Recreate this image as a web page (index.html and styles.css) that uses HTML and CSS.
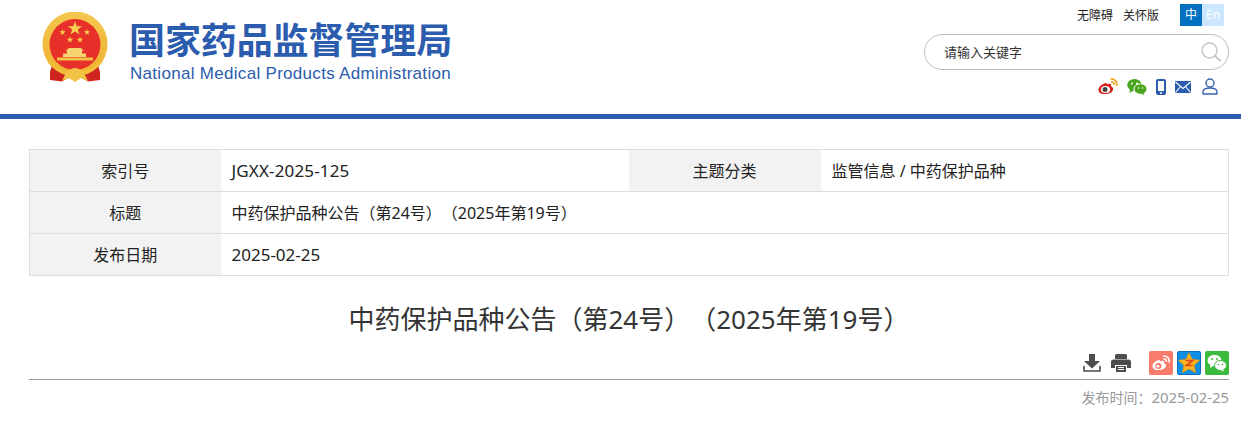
FILE: index.html
```html
<!DOCTYPE html>
<html lang="zh-CN">
<head>
<meta charset="utf-8">
<title>中药保护品种公告（第24号）（2025年第19号）</title>
<link rel="stylesheet" href="styles.css">
</head>
<body>
<header class="header">
  <div class="header-inner">
    <a class="brand">
      <svg class="emblem" viewBox="0 0 66 70" width="66" height="70">
        <defs>
          <linearGradient id="gold" x1="0" y1="0" x2="0" y2="1">
            <stop offset="0" stop-color="#f4c74f"/>
            <stop offset="1" stop-color="#eeb02f"/>
          </linearGradient>
        </defs>
        <path d="M12 46 L8 60 L8 68 L20 69.500 L28 65 L38 65 L46 69.500 L58 68 L58 60 L54 46 Z" fill="#cf2420"/>
        <circle cx="33" cy="32" r="32.500" fill="url(#gold)"/>
        <circle cx="33" cy="32.500" r="25.500" fill="#e8302a"/>
        <path d="M33 9 l1.700 5.200 5.500 0 -4.400 3.200 1.700 5.200 -4.500 -3.200 -4.500 3.200 1.700 -5.200 -4.400 -3.200 5.500 0z" fill="#f7cf50"/>
        <path d="M20.500 17 l.8 2.300 2.400 0 -1.900 1.400 .7 2.300 -2 -1.400 -2 1.400 .7 -2.300 -1.900 -1.400 2.400 0z" fill="#f7cf50"/>
        <path d="M45 17 l.8 2.300 2.400 0 -1.900 1.400 .7 2.300 -2 -1.400 -2 1.400 .7 -2.300 -1.900 -1.400 2.400 0z" fill="#f7cf50"/>
        <path d="M28 24.500 l.8 2.300 2.400 0 -1.900 1.400 .7 2.300 -2 -1.400 -2 1.400 .7 -2.300 -1.900 -1.400 2.400 0z" fill="#f7cf50"/>
        <path d="M38 24.500 l.8 2.300 2.400 0 -1.900 1.400 .7 2.300 -2 -1.400 -2 1.400 .7 -2.300 -1.900 -1.400 2.400 0z" fill="#f7cf50"/>
        <path d="M27 36 h12 l2.500 3 h-1.500 v2.500 h4 v3.500 h-23 v-3.500 h4 v-2.500 h-1.500z" fill="#f7d672"/>
        <path d="M15 45.500 h36 v3 h-36z" fill="#f4c446"/>
        <path d="M7 47 Q18 60 33 60 Q48 60 59 47 L60 51 Q48 64 33 64 Q18 64 6 51Z" fill="#f2bd38"/>
        <path d="M20 69 L24 61 Q33 51 42 61 L46 69 L39 66 L33 70 L27 66Z" fill="#f3c244"/>
      </svg>
      <div class="brand-text">
        <div class="brand-cn">国家药品监督管理局</div>
        <div class="brand-en">National Medical Products Administration</div>
      </div>
    </a>
    <div class="tools">
      <div class="tools-top">
        <a class="tool-link">无障碍</a>
        <a class="tool-link">关怀版</a>
        <div class="lang">
          <span class="lang-cn">中</span><span class="lang-en">En</span>
        </div>
      </div>
      <div class="search">
        <span class="search-text">请输入关键字</span>
        <svg class="search-icon" viewBox="0 0 20 20" width="20" height="20">
          <circle cx="8.500" cy="8.500" r="7.500" fill="none" stroke="#c4c4c4" stroke-width="1.400"/>
          <path d="M14 14 L19.500 19" stroke="#c4c4c4" stroke-width="1.800" fill="none"/>
        </svg>
      </div>
      <div class="socials">
        <svg class="s-weibo" viewBox="0 0 20 17" width="20" height="17">
          <path d="M8 5 C3.500 6 0 9.500 0.500 12.500 C1 15.500 5 16.500 8.500 16 C13 15.500 15.500 13 15 10.500 C14.800 9 13.500 8.600 13 8.300 C13.500 6.800 13 5.500 11 5.800 C10 6 9 6.500 8.700 6.500 C9 5.500 8.800 4.800 8 5Z" fill="#dc1b1b"/>
          <ellipse cx="7.500" cy="11.500" rx="4.600" ry="3.500" fill="#fff"/>
          <circle cx="7" cy="11.500" r="2.500" fill="#444"/>
          <path d="M12.500 1 C16.500 0.500 19.500 3.500 18.800 7.800 M13 4 C15 3.700 16.500 5 16 7" fill="none" stroke="#f0a722" stroke-width="1.700"/>
        </svg>
        <svg class="s-wechat" viewBox="0 0 20 16" width="20" height="16">
          <ellipse cx="7.500" cy="6" rx="7.300" ry="6" fill="#4ba61e"/>
          <path d="M3 10 L2.500 14 L6.500 11.500Z" fill="#4ba61e"/>
          <ellipse cx="13.500" cy="10" rx="6.500" ry="5.300" fill="#4ba61e" stroke="#fff" stroke-width="1"/>
          <path d="M16.500 14 L17.500 16 L14 15Z" fill="#4ba61e"/>
          <circle cx="5" cy="4.500" r="1" fill="#fff"/><circle cx="10" cy="4.500" r="1" fill="#fff"/>
          <circle cx="11.500" cy="9" r=".8" fill="#fff"/><circle cx="15.500" cy="9" r=".8" fill="#fff"/>
        </svg>
        <svg class="s-phone" viewBox="0 0 10 16" width="10" height="16">
          <rect x="0" y="0" width="10" height="16" rx="2" fill="#2b5cad"/>
          <rect x="2" y="2" width="6" height="10" fill="#fff"/>
          <circle cx="5" cy="14" r="1" fill="#fff"/>
        </svg>
        <svg class="s-mail" viewBox="0 0 16 12" width="16" height="12">
          <rect width="16" height="12" fill="#2b5cad"/>
          <path d="M0.500 1 L8 7.500 L15.500 1 M0.500 11.500 L5.500 5.500 M15.500 11.500 L10.500 5.500" fill="none" stroke="#fff" stroke-width="1.100"/>
        </svg>
        <svg class="s-user" viewBox="0 0 16 17" width="16" height="17">
          <circle cx="8" cy="5" r="4" fill="none" stroke="#3a63ad" stroke-width="1.400"/>
          <path d="M1 16 L1 14 C1 11 4 10 8 10 C12 10 15 11 15 14 L15 16 Z" fill="none" stroke="#3a63ad" stroke-width="1.400" stroke-linejoin="round"/>
        </svg>
      </div>
    </div>
  </div>
</header>
<main class="main">
  <table class="meta">
    <colgroup>
      <col class="col-a"><col class="col-b"><col class="col-c"><col>
    </colgroup>
    <tr>
      <th>索引号</th><td class="td-num"><span class="num code">JGXX-2025-125</span></td>
      <th>主题分类</th><td>监管信息 / 中药保护品种</td>
    </tr>
    <tr>
      <th>标题</th><td colspan="3">中药保护品种公告（第24号）（2025年第19号）</td>
    </tr>
    <tr>
      <th>发布日期</th><td class="td-num" colspan="3"><span class="num">2025-02-25</span></td>
    </tr>
  </table>
  <h1 class="title">中药保护品种公告（第24号）（2025年第19号）</h1>
  <div class="actions">
    <svg class="a-icon" viewBox="0 0 18 18" width="18" height="18">
      <path d="M6 0 h6 v7 h5 l-8 7.500 -8 -7.500 h5z" fill="#4d4d4d"/>
      <path d="M1 12 v5 h16 v-5" fill="none" stroke="#4d4d4d" stroke-width="1.600"/>
    </svg>
    <svg class="a-icon a-print" viewBox="0 0 20 18" width="20" height="18">
      <path d="M4 5 V1.500 Q4 0 5.500 0 H14.500 Q16 0 16 1.500 V5 Z" fill="#4d4d4d"/>
      <path d="M2.500 5.500 H17.500 Q20 5.500 20 8 V14 H16 V11 H4 V14 H0 V8 Q0 5.500 2.500 5.500Z" fill="#4d4d4d"/>
      <path d="M5 12 H15 V18 H5Z" fill="#4d4d4d"/>
      <path d="M7 13.500 H13 M7 15.500 H13" stroke="#fff" stroke-width="1"/>
    </svg>
    <div class="shares">
      <svg class="share" viewBox="0 0 24 24" width="24" height="24">
        <rect width="24" height="24" rx="2" fill="#fa7a6b"/>
        <path d="M10 9 C6 10 3 13 3.500 15.500 C4 18.500 8 19.500 11 19 C15 18.500 17.500 16.500 17 14 C16.800 13 15.500 12.500 15 12.300 C15.500 10.800 15 9.500 13 9.800 L11 10.500 C11.300 9.500 11 8.800 10 9Z" fill="#fff"/>
        <circle cx="9.500" cy="15" r="3" fill="#fa7a6b"/>
        <circle cx="9" cy="15.300" r="1.400" fill="#fff"/>
        <path d="M14 5 C18 4.500 21 7.500 20 11.500 M14.500 8 C16.500 7.700 17.800 9 17.300 11" fill="none" stroke="#fff" stroke-width="1.600"/>
      </svg>
      <svg class="share" viewBox="0 0 24 24" width="24" height="24">
        <rect width="24" height="24" rx="2" fill="#0e8fe3"/>
        <rect x=".5" y=".5" width="23" height="23" rx="2" fill="none" stroke="#0a6dbd"/>
        <path d="M12 1.500 L15.200 8.300 L22.800 9.200 L17.200 14.300 L18.700 21.800 L12 18 L5.300 21.800 L6.800 14.300 L1.200 9.200 L8.800 8.300Z" fill="#fbb41d" stroke="#d98a10" stroke-width=".6"/>
        <path d="M8.500 9.500 H15.500 L9.500 14.500 H15.500" fill="none" stroke="#e0471c" stroke-width="1.700"/>
      </svg>
      <svg class="share" viewBox="0 0 24 24" width="24" height="24">
        <rect width="24" height="24" rx="2" fill="#3cba3e"/>
        <ellipse cx="9.500" cy="9.500" rx="7" ry="5.800" fill="#fff"/>
        <path d="M5.500 13 L5 17 L9 14.500Z" fill="#fff"/>
        <ellipse cx="15.500" cy="14.500" rx="6" ry="5" fill="#fff" stroke="#3cba3e" stroke-width="1"/>
        <path d="M18 18 L19 20.500 L15.500 19Z" fill="#fff"/>
        <circle cx="7" cy="8" r="1" fill="#3cba3e"/><circle cx="12" cy="8" r="1" fill="#3cba3e"/>
        <circle cx="13.500" cy="13.500" r=".8" fill="#3cba3e"/><circle cx="17.500" cy="13.500" r=".8" fill="#3cba3e"/>
      </svg>
    </div>
  </div>
  <div class="pubdate">发布时间：<span class="num">2025-02-25</span></div>
</main>
</body>
</html>
```
FILE: styles.css
```css
* { box-sizing: border-box; }
html, body { margin: 0; padding: 0; background: #fff; }
body {
  font-family: "Noto Sans", "Noto Sans CJK SC", sans-serif;
  color: #333;
  text-spacing-trim: space-all;
}
.num { font-size: 1.0625em; }
.code { letter-spacing: 0.15px; }
.header {
  height: 119px;
  border-bottom: 5px solid #2b5cad;
}
.header-inner {
  display: flex;
  justify-content: space-between;
  padding: 0 12px 0 42px;
}
.brand {
  display: flex;
  padding-top: 12px;
}
.emblem { display: block; }
.brand-text { margin-left: 22px; padding-top: 4px; }
.brand-cn {
  font-family: "Noto Sans CJK SC", sans-serif;
  font-size: 36px;
  line-height: 44px;
  font-weight: 700;
  color: #2b5cad;
  letter-spacing: -0.1px;
  margin-left: -1px;
  white-space: nowrap;
}
.brand-en {
  font-family: "Liberation Sans", sans-serif;
  font-size: 17px;
  line-height: 20px;
  margin-top: 4px;
  color: #2b5cad;
  letter-spacing: 0.3px;
  white-space: nowrap;
}
.tools {
  width: 305px;
  padding-top: 4px;
}
.tools-top {
  display: flex;
  align-items: center;
  justify-content: flex-end;
  height: 22px;
  padding-right: 5px;
}
.tool-link {
  font-size: 12px;
  color: #222;
  margin-right: 10px;
}
.lang { display: flex; margin-left: 11px; }
.lang-cn, .lang-en {
  width: 22px;
  height: 22px;
  font-size: 12px;
  line-height: 22px;
  text-align: center;
  color: #fff;
}
.lang-cn { background: #0070c0; }
.lang-en { background: #cce6ff; }
.search {
  display: flex;
  align-items: center;
  justify-content: space-between;
  height: 36px;
  margin-top: 8px;
  padding: 0 7px 0 19px;
  border: 1px solid #bbb;
  border-radius: 18px;
}
.search-text { font-size: 13px; color: #333; padding-bottom: 2px; }
.socials {
  display: flex;
  align-items: center;
  justify-content: flex-end;
  gap: 9px;
  height: 17px;
  margin-top: 8px;
  padding-right: 11px;
}
.s-user { margin-left: 2px; }
.main {
  width: 1200px;
  margin-left: 29px;
  padding-top: 30px;
}
.meta {
  width: 1200px;
  table-layout: fixed;
  border-collapse: collapse;
  border: 1px solid #ddd;
  font-size: 16px;
  color: #222;
}
.col-a { width: 191px; }
.col-b { width: 408px; }
.col-c { width: 192px; }
.meta tr { height: 42px; border-top: 1px solid #ddd; }
.meta th {
  padding: 0 0 2px;
  font-weight: 400;
  background: #f2f2f2;
  text-align: center;
}
.meta td {
  padding: 0 10px 2px 11px;
  text-align: left;
}
.meta .td-num { padding-bottom: 0; }
.title {
  margin: 24px 0 0;
  font-size: 26px;
  line-height: 38px;
  font-weight: 400;
  color: #333;
  text-align: center;
}
.actions {
  display: flex;
  align-items: center;
  justify-content: flex-end;
  height: 34px;
  margin-top: 8px;
  padding: 4px 0 3px;
  border-bottom: 1px solid #999;
}
.a-icon { display: block; margin-right: 10px; }
.a-print { margin-right: 18px; }
.shares { display: flex; gap: 4px; }
.share { display: block; }
.pubdate {
  margin-top: 8px;
  font-size: 14px;
  line-height: 18px;
  color: #999;
  text-align: right;
}
```
